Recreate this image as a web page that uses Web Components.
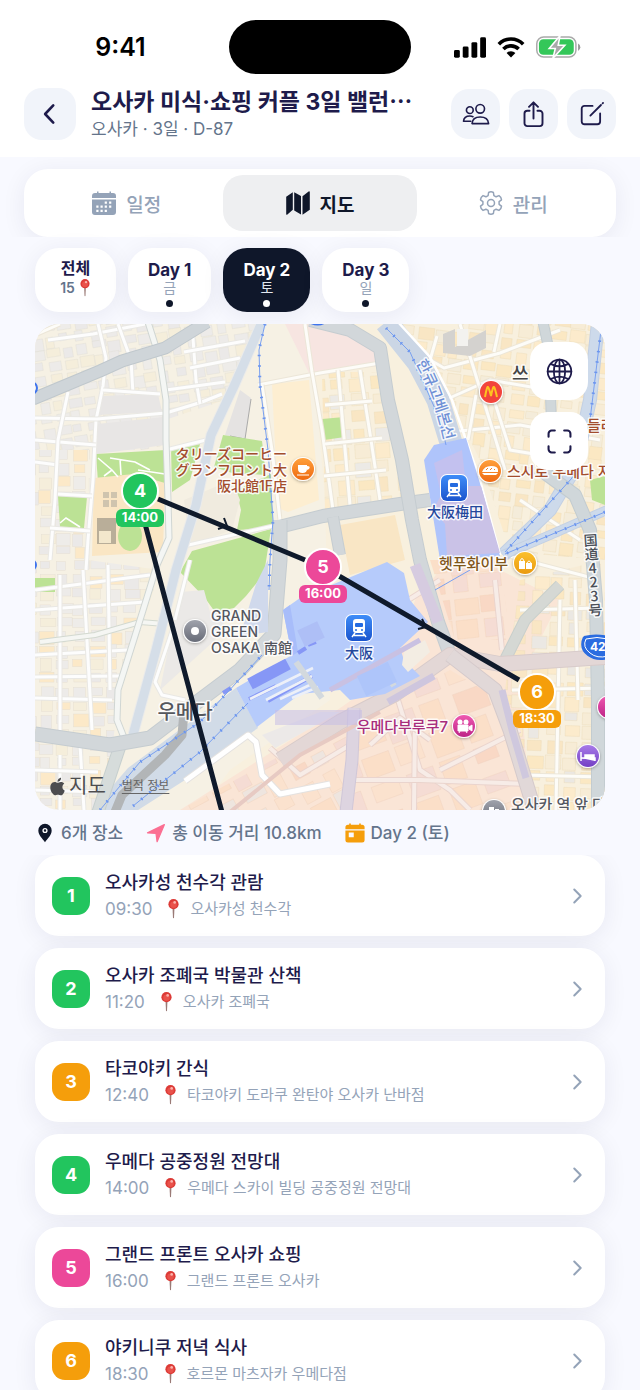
<!DOCTYPE html>
<html lang="ko">
<head>
<meta charset="utf-8">
<meta name="viewport" content="width=device-width, initial-scale=1">
<title>오사카 미식·쇼핑 커플 3일</title>
<style>
  html, body { margin: 0; height: 100%; }
  body {
    --navy: #1e1b4b; --ink: #0f172a; --slate: #64748b; --mute: #94a3b8;
    --tint: #f1f4fa; --green: #22c55e; --pink: #ec4899; --orange: #f59e0b;
    --shadow: 0 4px 24px rgba(30, 27, 75, .07);
    background: #f8f9ff; color: var(--navy);
    font-family: Inter, "Noto Sans CJK KR", "Noto Sans CJK JP", sans-serif;
    overflow: hidden;
  }
</style>
</head>
<body>
<trip-screen>
  <status-bar slot="header"></status-bar>
  <trip-header slot="header">
    <span slot="title">오사카 미식·쇼핑 커플 3일 밸런⋯</span>
    <span slot="meta">오사카 · 3일 · D-87</span>
  </trip-header>
  <nav-tabs slot="tabs"></nav-tabs>
  <day-strip slot="content">
    <day-chip label="전체" count="15"></day-chip>
    <day-chip label="Day 1" weekday="금"></day-chip>
    <day-chip label="Day 2" weekday="토" selected></day-chip>
    <day-chip label="Day 3" weekday="일"></day-chip>
  </day-strip>
  <trip-map slot="content"></trip-map>
  <trip-stats slot="content">
    <trip-stat icon="marker">6개 장소</trip-stat>
    <trip-stat icon="navigate">총 이동 거리 10.8km</trip-stat>
    <trip-stat icon="today">Day 2 (토)</trip-stat>
  </trip-stats>
  <place-card slot="list" number="1" tone="green" time="09:30" place="오사카성 천수각">오사카성 천수각 관람</place-card>
  <place-card slot="list" number="2" tone="green" time="11:20" place="오사카 조폐국">오사카 조폐국 박물관 산책</place-card>
  <place-card slot="list" number="3" tone="orange" time="12:40" place="타코야키 도라쿠 완탄야 오사카 난바점">타코야키 간식</place-card>
  <place-card slot="list" number="4" tone="green" time="14:00" place="우메다 스카이 빌딩 공중정원 전망대">우메다 공중정원 전망대</place-card>
  <place-card slot="list" number="5" tone="pink" time="16:00" place="그랜드 프론트 오사카">그랜드 프론트 오사카 쇼핑</place-card>
  <place-card slot="list" number="6" tone="orange" time="18:30" place="호르몬 마츠자카 우메다점">야키니쿠 저녁 식사</place-card>
</trip-screen>

<script>
const define = (name, render, setup) => customElements.define(name, class extends HTMLElement {
  connectedCallback() {
    if (this.shadowRoot) return;
    const root = this.attachShadow({ mode: 'open' });
    root.innerHTML = render(this);
    if (setup) setup(this, root);
  }
});

const line = (w = 2) => `fill="none" stroke="currentColor" stroke-width="${w}" stroke-linecap="round" stroke-linejoin="round"`;
const ICONS = {
  back: `<path d="M15 4 7.5 12 15 20" ${line(2.4)}/>`,
  forward: `<path d="m9 5 7 7-7 7" ${line(2.2)}/>`,
  people: `<g ${line(1.4)}><circle cx="15.6" cy="7.6" r="3.7"/><path d="M8.6 20.2c.3-3.8 3.3-5.6 7-5.6s6.900 1.800 7.200 5.600z"/><circle cx="6.700" cy="8.700" r="2.900"/><path d="M7.600 18.200H1.300c.3-3 2.500-4.500 5.400-4.500 1 0 2 .2 2.700.6"/></g>`,
  share: `<path d="M8.500 8.700H6.500A2.500 2.500 0 0 0 4 11.200v8.600A2.500 2.500 0 0 0 6.500 22.300h11a2.500 2.500 0 0 0 2.500-2.500v-8.600a2.500 2.500 0 0 0-2.500-2.500h-2M12 15.500V1.500M8 5.200l4-4 4 4" ${line(1.700)}/>`,
  edit: `<path d="M12.500 4.500H5a2.500 2.500 0 0 0-2.500 2.500v12A2.500 2.500 0 0 0 5 21.500h12a2.500 2.500 0 0 0 2.500-2.500v-7.500M10.500 13.500l9.800-9.800M21.800 2.200l.4-.4" ${line(1.700)}/>`,
  calendar: `<path d="M0 7V5a3 3 0 0 1 3-3h2V.6h1.500V2h11V.6H19V2h2a3 3 0 0 1 3 3v2z" fill="currentColor"/><path fill-rule="evenodd" fill="currentColor" d="M0 8.500h24V21a3 3 0 0 1-3 3H3a3 3 0 0 1-3-3zM12.700 10.500v2.200h2.200v-2.200zm4.400 0v2.200h2.200v-2.200zM4.300 14.600v2.200h2.200v-2.200zm4.200 0v2.200h2.200v-2.200zm4.200 0v2.200h2.200v-2.200zm4.400 0v2.200h2.200v-2.200zM4.300 18.700v2.200h2.200v-2.200zm4.200 0v2.200h2.200v-2.200zm4.200 0v2.200h2.200v-2.200z"/>`,
  map: `<path fill="currentColor" d="M.2 5.700 6.800 1.200V18.800L1.400 23.600Q.2 24.200.2 22.900zM8.200 1.200l6.800 3.900V23.500L8.200 19.400zM16.500 5.300 22.600.4q1.200-.5 1.200.8V18.800l-7.300 4.900z"/>`,
  gear: `<g ${line(1.500)}><circle cx="12" cy="12" r="3.500"/><path d="M9.600 1.500Q12 .2 14.400 1.500L14.900 4.600 17.100 5.800 20 4.600Q22.300 6 22.500 8.800L20.100 10.700V13.300L22.500 15.200Q22.300 18 20 19.400L17.100 18.200 14.900 19.400 14.400 22.500Q12 23.800 9.600 22.500L9.100 19.400 6.900 18.200 4 19.400Q1.700 18 1.500 15.200L3.900 13.300V10.700L1.500 8.800Q1.700 6 4 4.600L6.900 5.800 9.100 4.600z"/></g>`,
  globe: `<g ${line(1.600)}><circle cx="12" cy="12" r="10.500"/><ellipse cx="12" cy="12" rx="5" ry="10.500"/><path d="M12 1.500v21M1.500 12h21M4.200 5.200q7.800 4.600 15.600 0M4.200 18.800q7.800-4.600 15.600 0"/></g>`,
  expand: `<path d="M1.500 7.500v-3a3 3 0 0 1 3-3h3M16.500 1.500h3a3 3 0 0 1 3 3v3M22.500 16.500v3a3 3 0 0 1-3 3h-3M7.500 22.500h-3a3 3 0 0 1-3-3v-3" ${line(2)}/>`,
  marker: `<path fill="#0f172a" d="M12 1a8 8 0 0 0-8 8c0 5.500 4.800 9.600 8 14 3.200-4.400 8-8.500 8-14a8 8 0 0 0-8-8"/><circle cx="12" cy="9" r="2.300" fill="none" stroke="#fff" stroke-width="1.600"/>`,
  navigate: `<path fill="#fb6f92" stroke="#fb6f92" stroke-width="1.500" stroke-linejoin="round" d="M22 2 1.800 11.800 12 12.600 13.300 22.400z"/>`,
  today: `<path fill="#f59e0b" d="M.5 7.500V5a3 3 0 0 1 3-3H5V.7h2V2h10V.7h2V2h1.500a3 3 0 0 1 3 3v2.500z"/><path fill-rule="evenodd" fill="#f59e0b" d="M.5 9h23v11.500a3 3 0 0 1-3 3h-17a3 3 0 0 1-3-3zM4.500 11.500h6v5.500h-6z"/>`,
  signal: `<g fill="#000"><rect x="0" y="13" width="6" height="8" rx="1.500"/><rect x="9" y="9.500" width="6" height="11.500" rx="1.500"/><rect x="18" y="5" width="6" height="16" rx="1.500"/><rect x="27" y="0" width="6" height="21" rx="1.500"/></g>`,
  wifi: `<path d="M1.800 7.200a17 17 0 0 1 24.400 0M6.400 12a10.700 10.700 0 0 1 15.200 0" fill="none" stroke="#000" stroke-width="3.600"/><path d="M14 20.500 9.600 16a6.200 6.200 0 0 1 8.800 0z" fill="#000"/>`,
  battery: `<rect x=".8" y=".8" width="40" height="20.400" rx="7" fill="none" stroke="#a9a9a9" stroke-width="1.500"/><rect x="3" y="3" width="35.600" height="16" rx="4.500" fill="#34c759"/><path d="M43 7.500v7.500q2.300-1 2.300-3.700T43 7.500" fill="#999"/><path d="M24.500-.5 13.500 12.600h6.200L17.300 22.500 29.500 9.200h-6.800z" fill="#a9a9a9" stroke="#fff" stroke-width="1.600"/>`,
  pushpin: `<path d="M5.900 9h2.200L7.600 20l-.6 1.500L6.400 20z" fill="#9a7a76"/><circle cx="7" cy="5.700" r="5.600" fill="#dc3a36"/><circle cx="7" cy="6.300" r="3.600" fill="#e9524b"/><circle cx="8.300" cy="3.800" r="1.500" fill="#fbb3ac"/>`,
  apple: `<path fill="#4d4d4f" d="M16.400 12.600c0-2.500 2-3.700 2.200-3.800-1.200-1.800-3.100-2-3.700-2-1.600-.2-3.100.9-3.900.9s-2-.9-3.300-.9c-1.700 0-3.300 1-4.200 2.500-1.800 3.100-.5 7.700 1.300 10.200.9 1.200 1.900 2.600 3.200 2.600 1.300-.1 1.800-.8 3.300-.8s2 .8 3.400.8c1.400 0 2.300-1.200 3.100-2.500 1-1.400 1.400-2.800 1.400-2.900-.1 0-2.800-1.100-2.800-4.100M13.900 5.200c.7-.8 1.200-2 1-3.200-1 0-2.200.7-2.900 1.500-.6.700-1.200 1.900-1 3 1.100.1 2.200-.5 2.900-1.300"/>`
};
const icon = (name, w = 24, h = w, box = '0 0 24 24') =>
  `<svg aria-hidden="true" width="${w}" height="${h}" viewBox="${box}">${ICONS[name]}</svg>`;

const RESET = `*{box-sizing:border-box} svg{display:block;flex:none} button{font:inherit;color:inherit;border:0;padding:0;margin:0;background:none;cursor:pointer}`;

define('trip-screen', () => `<style>${RESET}
  :host{display:flex;flex-direction:column;height:100vh}
  header{background:#fff}
  .tabs{padding:12px 24px 0;overflow:hidden;flex:none}
  .list{flex:1;min-height:0;overflow-y:auto;scrollbar-width:none;padding:0 35px 24px;display:flex;flex-direction:column;gap:12px}
  </style>
  <header><slot name="header"></slot></header>
  <div class="tabs"><slot name="tabs"></slot></div>
  <slot name="content"></slot>
  <main class="list"><slot name="list"></slot></main>`);

define('status-bar', () => `<style>${RESET}
  :host{display:grid;grid-template-columns:1fr 182px 1fr;align-items:center;padding:20px 12px 0}
  time{justify-self:center;font-size:25px;font-weight:600;line-height:54px;color:#000}
  .island{height:54px;border-radius:27px;background:#000}
  .right{display:flex;align-items:center;justify-content:center;gap:11px;padding-right:5px}
  </style>
  <time>9:41</time><div class="island"></div>
  <div class="right">${icon('signal', 32, 21, '0 0 33 21')}${icon('wifi', 28, 21, '0 0 28 21')}${icon('battery', 45, 22, '0 0 46 22')}</div>`);

define('trip-header', () => `<style>${RESET}
  :host{display:flex;align-items:center;padding:13px 24px 16px;gap:15px}
  button{display:grid;place-items:center;background:var(--tint);border-radius:18px;width:49px;height:50px;flex:none}
  .back{width:52px;height:52px}
  .text{flex:1;min-width:0;white-space:nowrap}
  h1{margin:0;font-size:23px;line-height:30px;font-weight:700}
  p{margin:0;font-size:17px;line-height:24px;color:var(--slate)}
  .actions{display:flex;gap:9px}
  </style>
  <button class="back" aria-label="뒤로">${icon('back', 26)}</button>
  <div class="text"><h1><slot name="title"></slot></h1><p><slot name="meta"></slot></p></div>
  <div class="actions">
    <button aria-label="동행">${icon('people', 28)}</button>
    <button aria-label="공유">${icon('share', 27)}</button>
    <button aria-label="편집">${icon('edit', 26)}</button>
  </div>`);

define('nav-tabs', () => `<style>${RESET}
  :host{display:grid;grid-template-columns:repeat(3,1fr);padding:6px;border-radius:24px;background:#fff;box-shadow:var(--shadow)}
  button{height:56px;border-radius:20px;display:flex;align-items:center;justify-content:center;gap:10px;font-size:19px;font-weight:500;color:var(--mute)}
  .on{background:#eeeff1;color:var(--ink);font-weight:600}
  </style>
  <button>${icon('calendar', 24)}일정</button>
  <button class="on" aria-current="page">${icon('map', 24)}지도</button>
  <button>${icon('gear', 24)}관리</button>`);

define('day-strip', () => `<style>:host{display:flex;gap:12px;padding:11px 35px 12px}</style><slot></slot>`);

define('day-chip', el => `<style>${RESET}
  :host{display:block}
  button{display:flex;flex-direction:column;align-items:center;height:64px;min-width:81px;padding:13px 20px 0;border-radius:24px;background:#fff;box-shadow:var(--shadow);font-size:17px;line-height:18px;font-weight:700}
  small{font-size:14px;line-height:18px;font-weight:400;color:var(--mute)}
  i{width:7px;height:7px;border-radius:50%;background:var(--ink);margin-top:3px}
  .all{padding-top:11px;font-size:16px}
  .all small{display:flex;align-items:center;gap:4px;font-weight:600;color:var(--slate);line-height:22px}
  :host([selected]) button{background:var(--ink);color:#fff}
  :host([selected]) small{color:#e2e8f0}
  :host([selected]) i{background:#fff}
  </style>` + (el.hasAttribute('count')
    ? `<button class="all">${el.getAttribute('label')}<small>${el.getAttribute('count')}${icon('pushpin', 12, 18, '0 0 14 22')}</small></button>`
    : `<button aria-pressed="${el.hasAttribute('selected')}">${el.getAttribute('label')}<small>${el.getAttribute('weekday')}</small><i></i></button>`));

define('trip-stats', () => `<style>:host{display:flex;align-items:center;gap:23px;padding:0 35px;height:45px;flex:none}</style><slot></slot>`);
define('trip-stat', el => `<style>${RESET}:host{display:flex;align-items:center;gap:6px;font-size:17px;line-height:24px;font-weight:500;color:var(--slate);white-space:nowrap}</style>${icon(el.getAttribute('icon'), 20)}<span><slot></slot></span>`);

define('place-card', el => `<style>${RESET}
  :host{display:block;flex:none}
  button{display:flex;align-items:center;gap:15px;width:100%;height:81px;padding:0 17px;border-radius:24px;background:#fff;box-shadow:var(--shadow);text-align:left}
  .num{width:38px;height:38px;border-radius:13px;display:grid;place-items:center;flex:none;background:var(--${el.getAttribute('tone')});color:#fff;font-size:18px;font-weight:700}
  .text{flex:1;min-width:0;white-space:nowrap}
  .name{display:block;font-size:18px;line-height:26px;font-weight:500}
  .sub{display:flex;align-items:center;font-size:15px;line-height:26px;color:var(--mute)}
  time{font-size:17px;margin-right:15px}
  .sub svg{margin-right:10px}
  .go{color:var(--mute)}
  </style>
  <button><span class="num">${el.getAttribute('number')}</span>
  <span class="text"><span class="name"><slot></slot></span><span class="sub"><time>${el.getAttribute('time')}</time>${icon('pushpin', 13, 20, '0 0 14 22')}${el.getAttribute('place')}</span></span>
  <span class="go">${icon('forward', 22)}</span></button>`);

/* Small building footprints, laid out in a zone polygon from a fixed seed. */
let seed = 7;
const rnd = () => (seed = (seed * 16807) % 2147483647) / 2147483647;
const clips = [];
function buildings(poly, angle, cell, colors, edge) {
  const pts = poly.split(' ').map(p => p.split(',').map(Number));
  const xs = pts.map(p => p[0]), ys = pts.map(p => p[1]);
  const id = 'zone' + clips.length;
  clips.push(`<clipPath id="${id}"><polygon points="${poly}"/></clipPath>`);
  const x0 = Math.min(...xs), x1 = Math.max(...xs), y0 = Math.min(...ys), y1 = Math.max(...ys);
  const cx = (x0 + x1) / 2, cy = (y0 + y1) / 2;
  let out = '';
  for (let y = y0 - 30; y < y1 + 30; y += cell)
    for (let x = x0 - 30; x < x1 + 30; x += cell * 1.2) {
      const w = cell * (.6 + rnd() * .5), h = cell * (.5 + rnd() * .45);
      const c = colors[Math.floor(rnd() * colors.length)];
      out += `<rect x="${(x + rnd() * 3).toFixed(1)}" y="${(y + rnd() * 3).toFixed(1)}" width="${w.toFixed(1)}" height="${h.toFixed(1)}" fill="${c}"/>`;
    }
  return `<g clip-path="url(#${id})"><g transform="rotate(${angle} ${cx} ${cy})" stroke="${edge}" stroke-width=".4">${out}</g></g>`;
}
const road = (d, w, c) => `<path d="${d}" stroke="${c}" stroke-width="${w}"/>`;
const cased = (d, w, c, e) => road(d, w + 2, e) + road(d, w, c);
const area = (points, c) => `<polygon points="${points}" fill="${c}"/>`;

function terrain() {
  const left = ['#ebe9e8', '#eeece9', '#f5eedb', '#edebe9'];
  const right = ['#fbe8c3', '#f9e6c4', '#f7ecd6', '#fcebcc'];
  const peach = ['#fbdfc8', '#f9d8c5', '#fbe2ce', '#f5dcd4'];
  return `
  <rect x="35" y="324" width="570" height="486" fill="#f6f1e4"/>
  ${area('310,324 605,324 605,810 200,810 230,770 330,700 325,500', '#f8f0de')}
  ${area('285,324 350,324 385,365 310,375', '#f7e5e1')}
  ${area('440,570 500,570 560,600 520,680 530,810 180,810 330,715 395,670 415,600', '#fae5d6')}
  ${buildings('35,324 262,324 225,400 165,420 160,450 35,450', -9, 13, left, '#e1ddd4')}
  ${buildings('35,450 90,450 88,560 160,570 118,700 105,810 35,810', 0, 14, [...left, '#fce9c8'], '#e3ddd0')}
  ${buildings('322,372 385,372 405,500 325,512', -4, 17, [...right, '#eceae6'], '#ecdcb8')}
  ${buildings('400,324 605,324 605,560 510,552 480,460 440,380', 7, 14, [...right, '#f4ecda'], '#ecdcb8')}
  ${buildings('520,580 605,560 605,810 540,810 505,690', 2, 15, [...right, '#ebe8e3'], '#ecdab6')}
  ${buildings('430,560 500,560 510,640 455,640', -6, 22, peach, '#f2d3ba')}
  ${buildings('180,810 300,745 345,720 350,810', -28, 22, [...peach, '#eee5df'], '#f0d2bb')}
  ${buildings('360,720 450,670 500,700 525,810 352,810', -20, 30, peach, '#f0d2bf')}
  ${area('97,424 165,417 165,445 97,454', '#e8e6e5')}
  ${area('99,396 158,394 162,412 97,415', '#e8e6e5')}
  ${area('240,390 251,398 245,440 225,435', '#e5e3e2')}
  <path d="M251 399 245 439 230 436" fill="none" stroke="#aaa" stroke-width="1"/>
  ${area('272,384 309,380 319,500 288,512 278,508', '#fdeed1')}
  ${area('340,525 395,515 405,560 350,575', '#f9e6c5')}
  ${area('96,454 166,450 166,488 98,482', '#bce295')}
  ${area('171,447 200,444 190,480 172,492', '#bce295')}
  ${area('223,435 262,441 266,475 232,473 214,467', '#bce295')}
  ${area('58,496 87,497 84,528 60,527', '#bce295')}
  ${area('236,490 271,474 273,528 237,530 241,510', '#bce295')}
  ${area('192,551 271,529 264,574 246,596 234,608 215,612 205,598 180,572', '#bce295')}
  ${area('35,578 55,578 55,592 35,592', '#bce295')}
  ${area('322,419 344,417 345,437 324,440', '#bce295')}
  ${area('590,480 605,476 605,505 592,500', '#bce295')}
  ${area('184,500 232,480 240,500 232,530 190,545', '#f0ebdf')}
  ${area('94,478 134,474 165,483 163,552 92,556', '#fae6c4')}
  <ellipse cx="130" cy="536" rx="12" ry="15" fill="#bce295"/>
  <path d="M98 458 112 470 118 477M112 470 104 476M110 458 135 462 150 470M120 459 121 475M138 470 165 474M60 523 66 518 80 527" fill="none" stroke="#fff" stroke-width="1.600"/>
  <g fill="#cfc4ae"><path d="M103 492h6v6h-6zM111 492h6v6h-6zM103 500h6v7h-6zM111 500h6v7h-6z"/><rect x="97" y="518" width="19" height="26" fill="#b9ae99"/><rect x="99" y="531" width="12" height="12" fill="#f3e7cc"/></g>
  ${area('181,592 204,590 210,612 228,615 215,640 160,690 170,640', '#ebe9e7')}
  ${area('262,735 320,712 340,712 275,748', '#ece9e8')}

  <g fill="none" stroke-linejoin="round">
  ${['M48 340 93 334 145 324', 'M98 324 106 358 103 386 96 420 93 480 88 540 86 570', 'M118 324 131 360 133 394', 'M35 418 97 419 166 413 202 402 222 394', 'M35 440 96 445', 'M35 462 58 465', 'M68 392 58 440 55 500 50 560', 'M58 494 92 496', 'M50 528 90 531', 'M103 390 160 394', 'M192 324 196 380 200 404', 'M166 390 225 382', 'M184 352 245 341', 'M190 368 240 358', 'M166 450 206 440', 'M35 590 150 575', 'M35 610 145 602', 'M35 677 120 676', 'M35 698 112 700', 'M35 655 128 650', 'M60 575 60 735', 'M83 570 92 730', 'M108 565 110 690', 'M60 755 60 810', 'M80 745 84 810', 'M35 770 98 772', 'M35 790 100 792', 'M184 546 273 526', 'M174 625 155 682 162 695 185 700', 'M190 560 175 620']
      .map(d => cased(d, 3, '#fdfdfd', '#e9e8e4')).join('')}
  ${cased('M40 642 95 635 140 622 165 624', 4, '#f5f6f3', '#d3d9d0')}
  ${['M258 385 320 373 380 363', 'M262 385 272 450 280 520', 'M305 324 312 372 322 430 333 510', 'M360 370 371 440 380 500', 'M338 370 350 505', 'M325 405 372 401', 'M324 476 386 470', 'M325 444 382 438', 'M437 336 430 360 444 368 500 353 560 330', 'M445 400 490 380 560 392', 'M450 432 520 425 600 440', 'M495 403 510 450 540 455', 'M468 440 476 395', 'M500 324 494 352', 'M520 500 580 540', 'M505 555 600 580', 'M520 610 600 608', 'M560 600 556 810', 'M512 690 605 688', 'M520 775 605 777', 'M575 580 578 700', 'M460 324 505 470', 'M35 335 60 324']
      .map(d => cased(d, 3, '#fdfcf8', '#ece6d8')).join('')}
  ${['M345 640 440 580', 'M398 700 420 770 450 790 470 810', 'M415 720 414 810', 'M352 780 420 780 530 784', 'M440 770 520 730', 'M370 745 400 718 430 740', 'M495 580 502 650', 'M270 748 300 775 350 745']
      .map(d => cased(d, 4, '#f7ece7', '#ead4cd')).join('')}

  ${cased('M262 322 235 384 211 435 196 505 176 570 156 650 133 735', 9, '#d5dee8', '#ebebea')}
  ${cased('M148 322 160 360 166 400 166 440 168 500 169 538 157 565 140 620 118 690 117 720 127 745', 5, '#f4f6f4', '#d0d6d3')}
  ${area('90,812 128,768 236,688 258,728 185,780 135,812', '#d1dbe7')}
  ${cased('M122 740 98 812', 11, '#d6dcdb', '#c6cfce')}
  ${cased('M33 399 100 371 122 361 165 348 207 322', 11, '#cfd5d9', '#c0c8cd')}
  ${cased('M598 322 590 400 575 468 550 510 503 555', 12, '#cddaeb', '#c3d0e3')}
  ${cased('M607 510 550 535 503 555', 8, '#cddaeb', '#c3d0e3')}
  ${road('M386 322 418 362 438 400 452 446', 23, '#cbd6e5')}
  ${road('M398 322 430 357 452 400 480 480 500 555', 2.500, '#fff')}
  ${cased('M275 528 323 516 400 504 430 500', 12, '#d2d7da', '#c5ccd0')}
  ${cased('M280 520 280 560 274 634 240 670 200 700 150 738 110 745 35 734', 13, '#d2d7da', '#c5ccd0')}
  ${cased('M310 320 350 330 380 348 388 400 402 460 412 520 420 560 438 622 450 655', 12, '#d2d7da', '#c5ccd0')}
  ${cased('M538 468 575 495 590 530 596 600 598 700 598 812', 12, '#d0d7da', '#c3ccd0')}
  ${cased('M543 322 549 350 552 440', 9, '#d0d7da', '#c3ccd0')}
  ${cased('M333 517 340 555', 10, '#d2d7da', '#c5ccd0')}
  ${road('M115 812 122 795 165 755 182 735 184 712', 9, '#b2b5b7')}
  ${cased('M185 781 248 735 256 742 262 775 280 794 330 784', 5, '#fff', '#e4e2e0')}
  ${cased('M560 585 525 620 505 660', 10, '#d5d8d4', '#c8cfcb')}
  ${cased('M605 657 500 664 450 655 395 694 340 722 280 760', 14, '#e3d7d6', '#d8cbca')}
  ${cased('M450 655 495 690 510 730 535 812', 13, '#e1d8d8', '#d5cacb')}
  ${road('M502 690 512 730 526 778', 7, '#cfc8de')}
  ${cased('M354 708 352 760 346 812', 11, '#ddd4e0', '#d0c7d8')}
  ${road('M388 702 434 676', 7, '#cec6de')}
  ${road('M415 565 438 622', 11, '#d6cbe0')}
  ${road('M230 812 300 755 380 712', 4, '#e7cac3')}
  </g>

  ${area('424,460 434,445 466,438 482,490 500,556 440,560 432,510', '#afc4fb')}
  ${area('468,486 481,486 500,553 447,556 445,524 433,510 446,486', '#cac2e7')}
  ${area('434,463 462,450 466,486 440,490', '#c3c1ef')}
  ${area('283,610 300,598 387,562 404,573 410,600 428,622 400,648 404,660 420,676 385,694 350,700 340,690 300,694 257,727 236,688 292,655', '#b6cbfb')}
  ${area('283,610 290,605 298,652 292,656', '#a8bdfa')}
  ${area('256,584 268,560 268,632 240,636', '#d0d9ec')}
  ${area('404,652 425,640 430,652 408,672 402,665', '#f3ede3')}
  <rect x="275" y="710" width="87" height="15" fill="#c6bde6" opacity=".55"/>
  <g stroke="#8697f6" fill="none"><path d="M250 684 288 664" stroke-width="12"/><path d="M249 699 276 686M268 701 312 676M223 693 231 688M298 653 306 648M308 645 316 642" stroke-width="4"/></g>
  <g stroke="#edf0f8" fill="none" stroke-width="2.600"><path d="M250 699 313 668M266 700 312 676M280 699 314 683M292 698 318 687"/></g>
  <path d="M296 662 322 698M382 667 394 686" fill="none" stroke="#d3d9de" stroke-width="6"/>
  <path d="M330 690 420 640" fill="none" stroke="#c9c1e2" stroke-width="5"/>
  <g><rect x="300" y="625" width="22" height="18" transform="rotate(-25 311 634)" fill="#aebff6"/><rect x="360" y="668" width="34" height="22" transform="rotate(-25 377 679)" fill="#aec5fa"/></g>
  ${area('443,334 455,329 455,347 486,330 486,348 470,356 443,353', '#d4d2cf')}<rect x="457" y="329" width="11" height="17" fill="#f3f2ef"/>

  <g fill="none" stroke="#79a0f0" stroke-width="1">
  <path d="M265 324 259 350 260 385 268 450 273 520 270 560 269 590"/>
  <path d="M100 810 140 762 200 722 262 655M133 806 200 752 248 703"/>
  <path d="M386 328 410 352 440 420 446 445"/>
  <path d="M601 330 590 420 572 478 505 552M605 512 505 554M435 590 470 570"/></g>
  <g fill="none" stroke="#6b95ef" stroke-width="3" stroke-dasharray="1.500 9">
  <path d="M265 324 259 350 260 385 268 450 273 520 270 560 269 590"/>
  <path d="M100 810 140 762 200 722 262 655M133 806 200 752 248 703"/>
  <path d="M386 328 410 352 440 420 446 445"/>
  <path d="M601 330 590 420 572 478 505 552M605 512 505 554"/></g>
  <g fill="none" stroke="#3f74ee" stroke-width="2"><circle cx="31" cy="388" r="6"/><circle cx="31" cy="565" r="5"/><path d="M311 323q7 3 13 0"/></g>`;
}

const poi = (x, y, fill, glyph) => `<g transform="translate(${x} ${y})"><circle r="12" fill="#fff" filter="url(#soft)"/><circle r="11" fill="${fill}"/>${glyph}</g>`;
const train = (x, y) => `<g transform="translate(${x} ${y})"><rect x="-14" y="-14" width="28" height="28" rx="7" fill="#fff"/><rect x="-13" y="-13" width="26" height="26" rx="6" fill="url(#rail)"/><rect x="-6" y="-9" width="12" height="14" rx="3" fill="#fff"/><rect x="-4" y="-5" width="8" height="4" rx="1" fill="#256be0"/><circle cx="-3" cy="2" r="1" fill="#256be0"/><circle cx="3" cy="2" r="1" fill="#256be0"/><path d="m-4 5-3 4M4 5l3 4M-5 7.500H5" stroke="#fff" stroke-width="1.500"/></g>`;
const stop = (x, y, n, time, color) => `<g transform="translate(${x} ${y})" fill="${color}"><circle r="18" stroke="#fff" stroke-width="2"/><rect x="-24" y="18" width="48" height="18" rx="6"/><g fill="#fff" text-anchor="middle" font-weight="700"><text y="6" font-size="18">${n}</text><text y="31" font-size="13">${time}</text></g></g>`;

define('trip-map', () => {
  const ground = terrain();
  return `<style>${RESET}
  :host{display:block;position:relative;margin:0 35px;border-radius:24px;overflow:hidden;flex:none}
  .canvas{width:100%;height:auto}
  .label{paint-order:stroke;stroke:#fff;stroke-opacity:.85;stroke-width:3px;stroke-linejoin:round;font-weight:500}
  .vertical{writing-mode:vertical-rl;text-orientation:upright;font-family:"Noto Sans CJK JP",sans-serif}
  .tools{position:absolute;top:18px;right:17px;display:flex;flex-direction:column;gap:12px}
  .tools button{width:58px;height:58px;border-radius:18px;background:#fff;display:grid;place-items:center;color:var(--navy)}
  .credit{position:absolute;left:13px;bottom:10px;display:flex;align-items:center;color:#4d4d4f;font-size:20px;line-height:28px}
  .credit a{font-size:12px;color:#666;margin-left:16px;text-underline-offset:3px}
  </style>
  <svg class="canvas" viewBox="35 324 570 486" role="img" aria-label="오사카 우메다 지도">
  <defs>${clips.join('')}
    <linearGradient id="rail" x2="0" y2="1"><stop stop-color="#3f8df8"/><stop offset="1" stop-color="#1a54cd"/></linearGradient>
    <linearGradient id="food" x2="0" y2="1"><stop stop-color="#ffa03a"/><stop offset="1" stop-color="#ee6a12"/></linearGradient>
    <linearGradient id="shop" x2="0" y2="1"><stop stop-color="#fbc02c"/><stop offset="1" stop-color="#ea9a10"/></linearGradient>
    <linearGradient id="film" x2="0" y2="1"><stop stop-color="#ee59b0"/><stop offset="1" stop-color="#bd2387"/></linearGradient>
    <linearGradient id="bed" x2="0" y2="1"><stop stop-color="#a77ae8"/><stop offset="1" stop-color="#7440c4"/></linearGradient>
    <linearGradient id="gray" x2="0" y2="1"><stop stop-color="#a0a3ac"/><stop offset="1" stop-color="#686c78"/></linearGradient>
    <filter id="soft" x="-30%" y="-30%" width="160%" height="160%"><feDropShadow dx="0" dy="1" stdDeviation="1.500" flood-opacity=".3"/></filter>
    <path id="hankyu" d="M416 363Q434 395 444 440"/>
  </defs>
  ${ground}
  <g class="label" fill="#a34d2d" font-size="14">
    <g text-anchor="end" lang="ja"><text x="287" y="459">タリーズコーヒー</text><text x="287" y="475">グランフロント大</text><text x="287" y="491">阪北館1F店</text></g>
    <text x="507" y="477" font-size="15">스시로 우메다 지</text><text x="587" y="431" font-size="15">들러</text>
  </g>
  <text class="label" font-size="15" fill="#6f90d6"><textPath href="#hankyu">한큐고베본선</textPath></text>
  <g class="label" text-anchor="middle" fill="#24479b" lang="ja" font-size="14"><text x="455" y="517">大阪梅田</text><text x="359" y="658">大阪</text></g>
  <g class="label" fill="#54565f" font-size="14"><text x="211" y="621">GRAND</text><text x="211" y="637">GREEN</text><text x="211" y="653" lang="ja">OSAKA 南館</text></g>
  <text class="label" x="512" y="380" font-size="18" fill="#444">쓰</text>
  <text class="label" x="508" y="569" font-size="15" fill="#80561a" text-anchor="end">헷푸화이부</text>
  <text class="label" x="448" y="732" font-size="15" fill="#a82d7c" text-anchor="end">우메다부루쿠7</text>
  <text class="label vertical" x="593" y="533" font-size="14" fill="#4a4f57" lang="ja" transform="rotate(-4 593 575)">国道423号</text>
  <text class="label" x="511" y="810" font-size="15" fill="#555861">오사카 역 앞 다</text>
  ${poi(303, 469, 'url(#food)', '<path d="M-5-4H4V0Q4 4-.5 4T-5 0zM4-3Q8-3 6 0L4 1" fill="#fff"/><path d="M-6 6H6" stroke="#fff" stroke-width="1.200"/>')}
  ${poi(491, 392, '#f2443c', '<path d="M-6 5Q-4-6-3-5T0 4Q2-6 3-5T6 5" fill="none" stroke="#fdc420" stroke-width="2"/>')}
  ${poi(490, 471, 'url(#food)', '<path d="M-8 1Q-6-5 1-5T8-1V1zM-8 2H8L6 4H-6z" fill="#fff"/><path d="m-4-1 2-2M0-1l2-2M4-1l1-1" stroke="#f28020" stroke-width="1"/>')}
  ${poi(525, 563, 'url(#shop)', '<path d="M-6-2H0V6H-6zM1 0H7V6H1z" fill="#fff"/><path d="M-5-2q2-5 4 0M2 0q2-4 4 0" fill="none" stroke="#fff"/>')}
  ${poi(195, 631, 'url(#gray)', '<circle r="4" fill="#fff"/>')}
  ${poi(464, 726, 'url(#film)', '<circle cx="-4" cy="-4" r="2.500" fill="#fff"/><circle cx="2" cy="-4" r="2.500" fill="#fff"/><path d="M-6-1H4V5H-6zM5 1 8-1V5L5 3zM-4 5-5 7M2 5 3 7" fill="#fff" stroke="#fff"/>')}
  ${poi(588, 756, 'url(#bed)', '<path d="M-7-4V5M-7 2H7V5M-3-1H6V2H-3z" fill="#fff" stroke="#fff" stroke-width="1.500"/>')}
  ${poi(609, 707, 'url(#film)', '')}
  ${poi(494, 811, 'url(#gray)', '<path d="M-5-4H0V4H-5zM1-2H5V4H1z" fill="#fff"/>')}
  ${train(454, 488)}${train(359, 628)}
  <path d="M584 637Q596 634 608 637V658Q596 661 588 655 579 648 584 637" fill="#2b6ce0" stroke="#2b6ce0" stroke-width="2"/>
  <path d="M586 639Q597 636 608 639V656Q597 659 590 653 582 647 586 639" fill="none" stroke="#fff" stroke-width="1"/>
  <text x="590" y="651" font-size="12" font-weight="700" fill="#fff">423</text>
  <text class="label" x="185" y="719" font-size="20" fill="#55575c" text-anchor="middle">우메다</text>
  <path d="M222 812 140 505M158 499 305 560M339 576 519 680" fill="none" stroke="#0f1a2b" stroke-width="5"/>
  <path d="m224 518 3 8-9 3M422 619l4 8-8 2" fill="none" stroke="#0f1a2b" stroke-width="2"/>
  ${stop(140, 491, 4, '14:00', '#22c55e')}
  ${stop(323, 567, 5, '16:00', '#ec4899')}
  ${stop(537, 692, 6, '18:30', '#f59e0b')}
  </svg>
  <div class="tools"><button aria-label="지도 유형">${icon('globe', 27)}</button><button aria-label="전체 화면">${icon('expand', 25)}</button></div>
  <div class="credit">${icon('apple', 21)}<span>지도</span><a href="#legal">법적 정보</a></div>`;
});
</script>
</body>
</html>
